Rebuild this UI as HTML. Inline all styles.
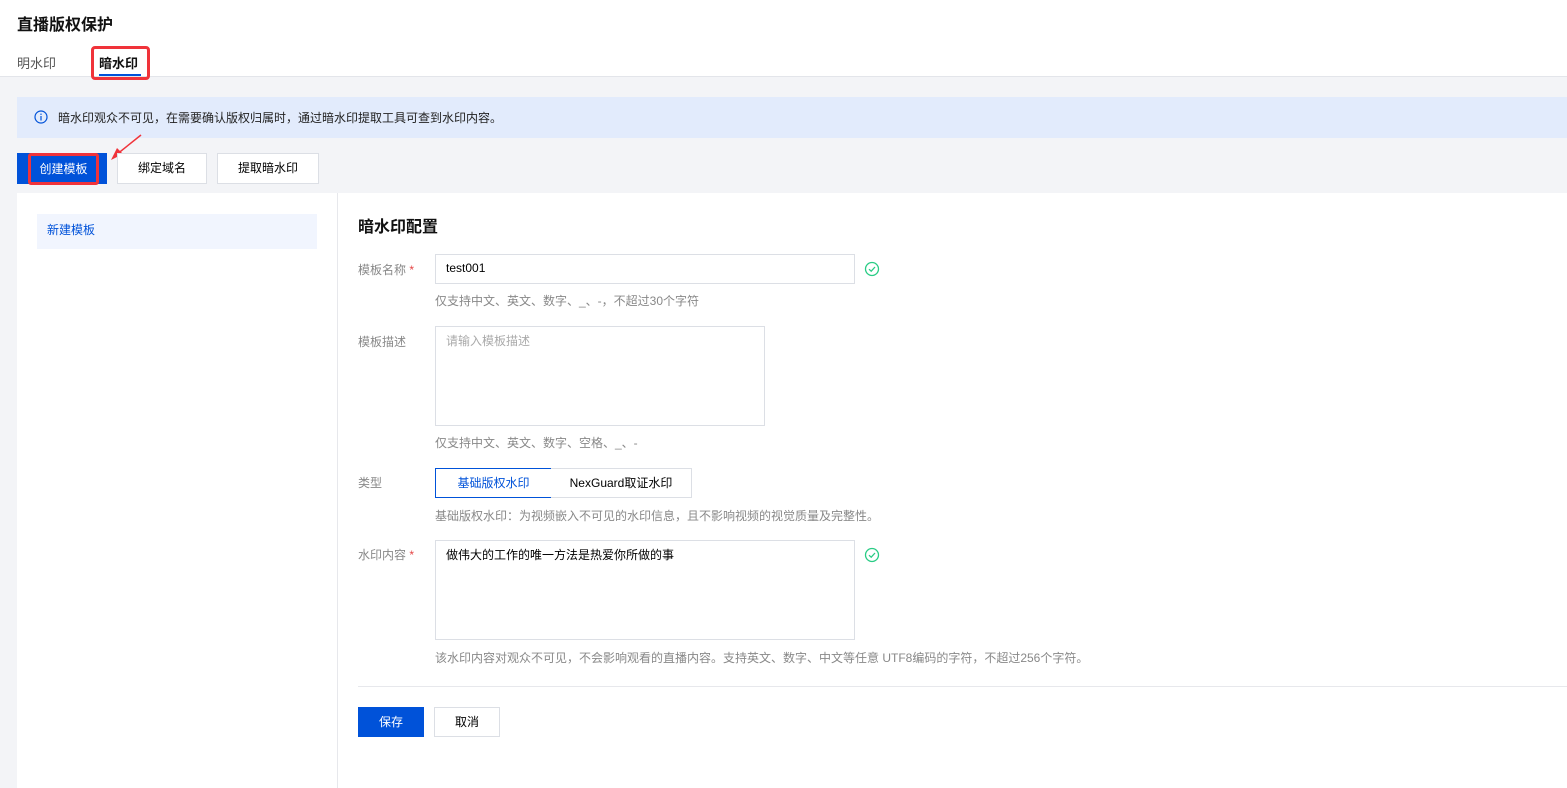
<!DOCTYPE html>
<html><head><meta charset="utf-8"><style>
*{box-sizing:border-box;margin:0;padding:0}
body{width:1567px;height:788px;overflow:hidden;background:#f3f4f7;font-family:"Liberation Sans","Noto Sans CJK SC",sans-serif;font-size:12px;color:#000;position:relative}
.a{position:absolute}
.hdr{left:0;top:0;width:1567px;height:77px;background:#fff;border-bottom:1px solid #e3e5ea}
.lbl{color:#888;font-size:12px}
.tip{color:#888;font-size:12px}
.inp{border:1px solid #dcdfe5;background:#fff}
.btn{border:1px solid #dcdfe5;background:#fff;text-align:center;line-height:29px;font-size:12px}
.star{color:#e54545}
</style></head><body>
<div class="a hdr"></div>
<div class="a" style="left:17px;top:11px;font-size:16px;font-weight:bold;color:#111">直播版权保护</div>
<div class="a" style="left:17px;top:53px;font-size:13px;color:#555">明水印</div>
<div class="a" style="left:99px;top:53px;font-size:13px;font-weight:bold;color:#111">暗水印</div>
<div class="a" style="left:99px;top:74px;width:42px;height:2px;background:#0052d9"></div>
<div class="a" style="left:91px;top:46px;width:59px;height:34px;border:3px solid #f0333a;border-radius:4px"></div>

<div class="a" style="left:17px;top:97px;width:1550px;height:41px;background:#e2ebfc"></div>
<svg class="a" style="left:34px;top:110px" width="14" height="14" viewBox="0 0 14 14"><circle cx="7" cy="7" r="6" fill="none" stroke="#0052d9" stroke-width="1.2"/><rect x="6.4" y="6" width="1.2" height="4.5" fill="#0052d9"/><rect x="6.4" y="3.6" width="1.2" height="1.3" fill="#0052d9"/></svg>
<div class="a" style="left:58px;top:109px;font-size:12px;color:#222">暗水印观众不可见，在需要确认版权归属时，通过暗水印提取工具可查到水印内容。</div>

<div class="a" style="left:17px;top:153px;width:90px;height:31px;background:#0052d9"></div>
<div class="a" style="left:28px;top:153px;width:71px;height:32px;border:3px solid #f0333a;border-radius:3px;color:#fff;text-align:center;line-height:26px">创建模板</div>
<svg class="a" style="left:108px;top:133px" width="36" height="28"><line x1="33" y1="2" x2="8" y2="22" stroke="#f0333a" stroke-width="1.5"/><path d="M3 27 L15 21 L9 15Z" fill="#f0333a"/></svg>
<div class="a btn" style="left:117px;top:153px;width:90px;height:31px">绑定域名</div>
<div class="a btn" style="left:217px;top:153px;width:102px;height:31px">提取暗水印</div>

<div class="a" style="left:17px;top:193px;width:1550px;height:595px;background:#fff"></div>
<div class="a" style="left:337px;top:193px;width:1px;height:595px;background:#e7e8ec"></div>
<div class="a" style="left:37px;top:214px;width:280px;height:35px;background:#f1f5fe;color:#0052d9;line-height:33px;padding-left:10px">新建模板</div>

<div class="a" style="left:358px;top:213px;font-size:16px;font-weight:bold;color:#111">暗水印配置</div>

<div class="a lbl" style="left:358px;top:261px">模板名称 <span class="star">*</span></div>
<div class="a inp" style="left:435px;top:254px;width:420px;height:30px;padding:6px 10px;font-size:12px">test001</div>
<svg class="a" style="left:864px;top:261px" width="16" height="16"><circle cx="8" cy="8" r="6.5" fill="none" stroke="#29cc85" stroke-width="1.3"/><path d="M5 8.2 L7.2 10.2 L11 6" fill="none" stroke="#29cc85" stroke-width="1.3"/></svg>
<div class="a tip" style="left:435px;top:292px">仅支持中文、英文、数字、_、-，不超过30个字符</div>

<div class="a lbl" style="left:358px;top:333px">模板描述</div>
<div class="a inp" style="left:435px;top:326px;width:330px;height:100px;padding:5px 10px;color:#aaa">请输入模板描述</div>
<div class="a tip" style="left:435px;top:434px">仅支持中文、英文、数字、空格、_、-</div>

<div class="a lbl" style="left:358px;top:474px">类型</div>
<div class="a btn" style="left:435px;top:468px;width:117px;height:30px;border-color:#0052d9;color:#0052d9;line-height:28px">基础版权水印</div>
<div class="a btn" style="left:551px;top:468px;width:141px;height:30px;line-height:28px;border-left:none">NexGuard取证水印</div>
<div class="a tip" style="left:435px;top:507px">基础版权水印：为视频嵌入不可见的水印信息，且不影响视频的视觉质量及完整性。</div>

<div class="a lbl" style="left:358px;top:546px">水印内容 <span class="star">*</span></div>
<div class="a inp" style="left:435px;top:540px;width:420px;height:100px;padding:5px 10px">做伟大的工作的唯一方法是热爱你所做的事</div>
<svg class="a" style="left:864px;top:547px" width="16" height="16"><circle cx="8" cy="8" r="6.5" fill="none" stroke="#29cc85" stroke-width="1.3"/><path d="M5 8.2 L7.2 10.2 L11 6" fill="none" stroke="#29cc85" stroke-width="1.3"/></svg>
<div class="a tip" style="left:435px;top:649px">该水印内容对观众不可见，不会影响观看的直播内容。支持英文、数字、中文等任意 UTF8编码的字符，不超过256个字符。</div>

<div class="a" style="left:358px;top:686px;width:1209px;height:1px;background:#e7e8ec"></div>
<div class="a" style="left:358px;top:707px;width:66px;height:30px;background:#0052d9;color:#fff;text-align:center;line-height:30px">保存</div>
<div class="a btn" style="left:434px;top:707px;width:66px;height:30px">取消</div>
</body></html>
